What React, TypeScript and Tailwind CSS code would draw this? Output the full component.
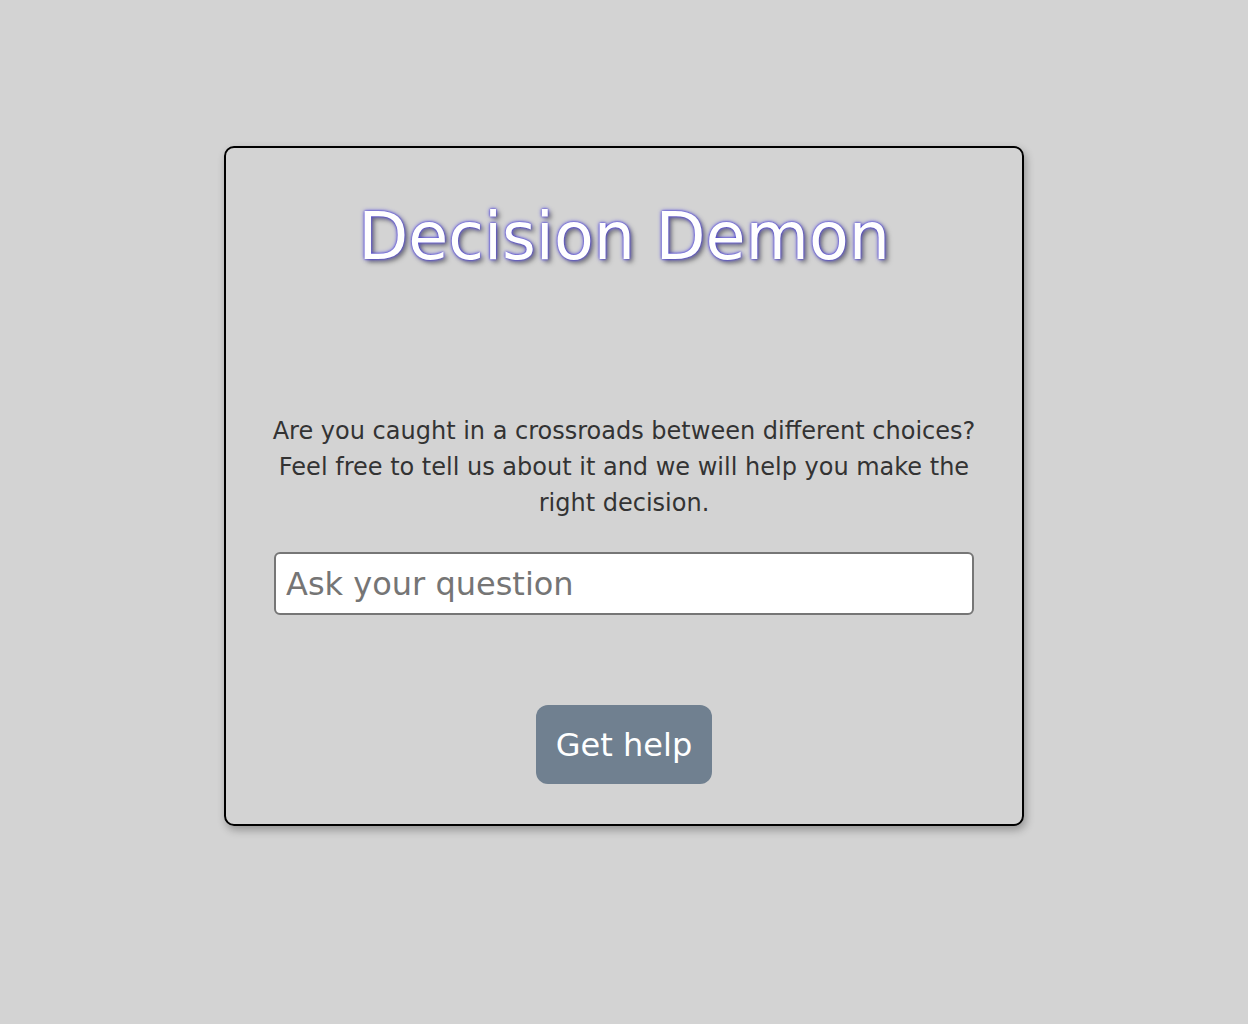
export default function App() {
  return (
    <main className="min-h-screen bg-[#d3d3d3] pt-[146px] font-['DejaVu_Sans',sans-serif]">
      <section className="mx-auto flex h-[680px] w-[800px] flex-col items-center rounded-[10px] border-2 border-black px-12 pt-[48px] shadow-[2px_4px_8px_rgba(0,0,0,0.3)]">
        <h1 className="text-[65px] leading-[82px] text-white [text-shadow:0_0_2px_#3a2fd0,0_0_4px_#5b50e6,3px_3px_5px_rgba(0,0,0,0.5)]">
          Decision Demon
        </h1>
        <p className="-mx-[6px] mt-[135px] text-center text-[24px] leading-[36px] text-[#333]">
          Are you caught in a crossroads between different choices? Feel free to tell us about it and we will help you make the right decision.
        </p>
        <input
          className="mt-[31px] h-[63px] w-full rounded-[6px] border-2 border-[#767676] bg-white px-[10px] text-[32px] text-[#333] placeholder:text-[#757575] focus:outline-none"
          placeholder="Ask your question"
        />
        <button className="mt-[90px] h-[79px] rounded-[12px] bg-[#708090] px-[20px] text-[32px] text-white">
          Get help
        </button>
      </section>
    </main>
  )
}
